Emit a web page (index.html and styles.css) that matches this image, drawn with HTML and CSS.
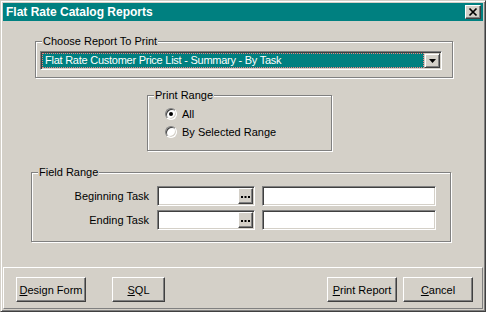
FILE: index.html
```html
<!DOCTYPE html>
<html>
<head>
<meta charset="utf-8">
<link rel="stylesheet" href="styles.css">
</head>
<body>
<div class="window">
  <div class="titlebar">
    <span class="title">Flat Rate Catalog Reports</span>
    <span class="close"><svg width="14" height="12" viewBox="0 0 14 12"><path d="M3.5 2.5 L10.5 9.5 M10.5 2.5 L3.5 9.5" stroke="#000" stroke-width="1.7" fill="none"/></svg></span>
  </div>
  <div class="content">
    <div class="group g-report">
      <span class="legend">Choose Report To Print</span>
      <div class="combo">
        <div class="combo-value"><span>Flat Rate Customer Price List - Summary - By Task</span></div>
        <div class="combo-btn"><svg width="7" height="4" viewBox="0 0 7 4"><path d="M0 0 H7 L3.5 4 Z" fill="#000"/></svg></div>
      </div>
    </div>
    <div class="group g-range">
      <span class="legend">Print Range</span>
      <div class="radio-row"><span class="radio checked"></span><span>All</span></div>
      <div class="radio-row"><span class="radio"></span><span>By Selected Range</span></div>
    </div>
    <div class="group g-field">
      <span class="legend">Field Range</span>
      <div class="field-row">
        <span class="field-label">Beginning Task</span>
        <div class="lookup"><div class="lookup-input"></div><div class="lookup-btn"><svg width="9" height="2" viewBox="0 0 9 2"><rect x="0" y="0" width="2" height="2"/><rect x="3.5" y="0" width="2" height="2"/><rect x="7" y="0" width="2" height="2"/></svg></div></div>
        <div class="textbox"></div>
      </div>
      <div class="field-row">
        <span class="field-label">Ending Task</span>
        <div class="lookup"><div class="lookup-input"></div><div class="lookup-btn"><svg width="9" height="2" viewBox="0 0 9 2"><rect x="0" y="0" width="2" height="2"/><rect x="3.5" y="0" width="2" height="2"/><rect x="7" y="0" width="2" height="2"/></svg></div></div>
        <div class="textbox"></div>
      </div>
    </div>
  </div>
  <div class="footer">
    <div class="btn w70"><span><u>D</u>esign Form</span></div>
    <div class="btn w53 sql"><span><u>S</u>QL</span></div>
    <div class="btn w70 print"><span><u>P</u>rint Report</span></div>
    <div class="btn w70 cancel"><span><u>C</u>ancel</span></div>
  </div>
</div>
</body>
</html>
```
FILE: styles.css
```css
html, body {
  margin: 0;
  padding: 0;
}
body {
  font-family: "Liberation Sans", Arial, sans-serif;
  font-size: 11px;
  color: #000;
  background: #d4d0c8;
}
.window {
  width: 486px;
  height: 312px;
  box-sizing: border-box;
  background: #d4d0c8;
  border: 1px solid;
  border-color: #d4d0c8 #404040 #404040 #d4d0c8;
  box-shadow: inset 1px 1px 0 #fff, inset -1px -1px 0 #808080;
  padding: 2px;
  display: flex;
  flex-direction: column;
}
.titlebar {
  height: 18px;
  flex: none;
  background: #008080;
  color: #fff;
  display: flex;
  align-items: center;
  justify-content: space-between;
  padding: 0 2px 0 3px;
}
.title {
  font-weight: bold;
  font-size: 12px;
}
.close {
  width: 16px;
  height: 14px;
  box-sizing: border-box;
  background: #d4d0c8;
  border: 1px solid;
  border-color: #fff #404040 #404040 #fff;
  box-shadow: inset -1px -1px 0 #808080;
  display: flex;
  align-items: center;
  justify-content: center;
}
.close svg { display: block; }
.content {
  flex: 1;
  display: flex;
  flex-direction: column;
  align-items: flex-start;
}
.group {
  position: relative;
  box-sizing: border-box;
  border: 1px solid #808080;
  box-shadow: 1px 1px 0 #fff, inset 1px 1px 0 #fff;
}
.legend {
  position: absolute;
  top: -8px;
  left: 6px;
  padding: 0 1px;
  background: #d4d0c8;
  line-height: 14px;
  white-space: nowrap;
}
.g-report {
  margin: 20px 0 0 32px;
  width: 418px;
  height: 37px;
  padding: 9px 0 0 4px;
}
.combo {
  width: 402px;
  height: 19px;
  box-sizing: border-box;
  border: 1px solid;
  border-color: #808080 #fff #fff #808080;
  box-shadow: inset 1px 1px 0 #404040, inset -1px -1px 0 #d4d0c8;
  padding: 1px;
  display: flex;
  background: #fff;
}
.combo-value {
  flex: 1;
  background: #008080;
  border: 1px dotted #f08080;
  color: #fff;
  display: flex;
  align-items: center;
  padding-left: 2px;
  line-height: 13px;
  letter-spacing: -0.25px;
}
.combo-btn {
  width: 16px;
  flex: none;
  box-sizing: border-box;
  background: #d4d0c8;
  border: 1px solid;
  border-color: #d4d0c8 #404040 #404040 #d4d0c8;
  box-shadow: inset 1px 1px 0 #fff, inset -1px -1px 0 #808080;
  display: flex;
  align-items: center;
  justify-content: center;
}
.combo-btn svg { display: block; }
.g-range {
  margin: 17px 0 0 144px;
  width: 185px;
  height: 56px;
  padding: 9px 0 0 17px;
}
.radio-row {
  height: 18px;
  display: flex;
  align-items: center;
  gap: 5px;
}
.radio {
  width: 12px;
  height: 12px;
  box-sizing: border-box;
  border-radius: 50%;
  background: #fff;
  border: 1px solid;
  border-color: #808080 #fff #fff #808080;
  box-shadow: inset 1px 1px 0 #404040, inset -1px -1px 0 #d4d0c8;
  position: relative;
  flex: none;
}
.radio.checked::after {
  content: "";
  position: absolute;
  left: 3px;
  top: 3px;
  width: 4px;
  height: 4px;
  border-radius: 50%;
  background: #000;
}
.g-field {
  margin: 21px 0 0 28px;
  width: 420px;
  height: 70px;
  padding: 13px 0 0 1px;
  display: flex;
  flex-direction: column;
  gap: 4px;
}
.field-row {
  display: flex;
  align-items: center;
  height: 20px;
}
.field-label {
  width: 116px;
  text-align: right;
  margin-right: 8px;
}
.lookup {
  width: 98px;
  height: 20px;
  box-sizing: border-box;
  border: 1px solid;
  border-color: #808080 #fff #fff #808080;
  box-shadow: inset 1px 1px 0 #404040, inset -1px -1px 0 #d4d0c8;
  padding: 1px;
  display: flex;
  background: #fff;
}
.lookup-input {
  flex: 1;
  background: #fff;
}
.lookup-btn {
  width: 15px;
  flex: none;
  box-sizing: border-box;
  background: #d4d0c8;
  border: 1px solid;
  border-color: #fff #404040 #404040 #fff;
  box-shadow: inset -1px -1px 0 #808080;
  display: flex;
  align-items: center;
  justify-content: center;
  padding-top: 2px;
}
.lookup-btn svg { display: block; fill: #000; }
.textbox {
  width: 174px;
  height: 20px;
  margin-left: 7px;
  box-sizing: border-box;
  border: 1px solid;
  border-color: #808080 #fff #fff #808080;
  box-shadow: inset 1px 1px 0 #404040, inset -1px -1px 0 #d4d0c8;
  background: #fff;
}
.footer {
  height: 42px;
  flex: none;
  box-sizing: border-box;
  border: 1px solid;
  border-color: #fff #808080 #808080 #fff;
  display: flex;
  align-items: flex-start;
  padding: 9px 9px 0 12px;
}
.btn {
  height: 25px;
  box-sizing: border-box;
  border: 1px solid;
  border-color: #fff #404040 #404040 #fff;
  box-shadow: inset -1px -1px 0 #808080;
  display: flex;
  align-items: center;
  justify-content: center;
  background: #d4d0c8;
}
.w70 { width: 70px; }
.w53 { width: 53px; }
.sql { margin-left: 26px; }
.print { margin-left: auto; }
.cancel { margin-left: 6px; }
```
